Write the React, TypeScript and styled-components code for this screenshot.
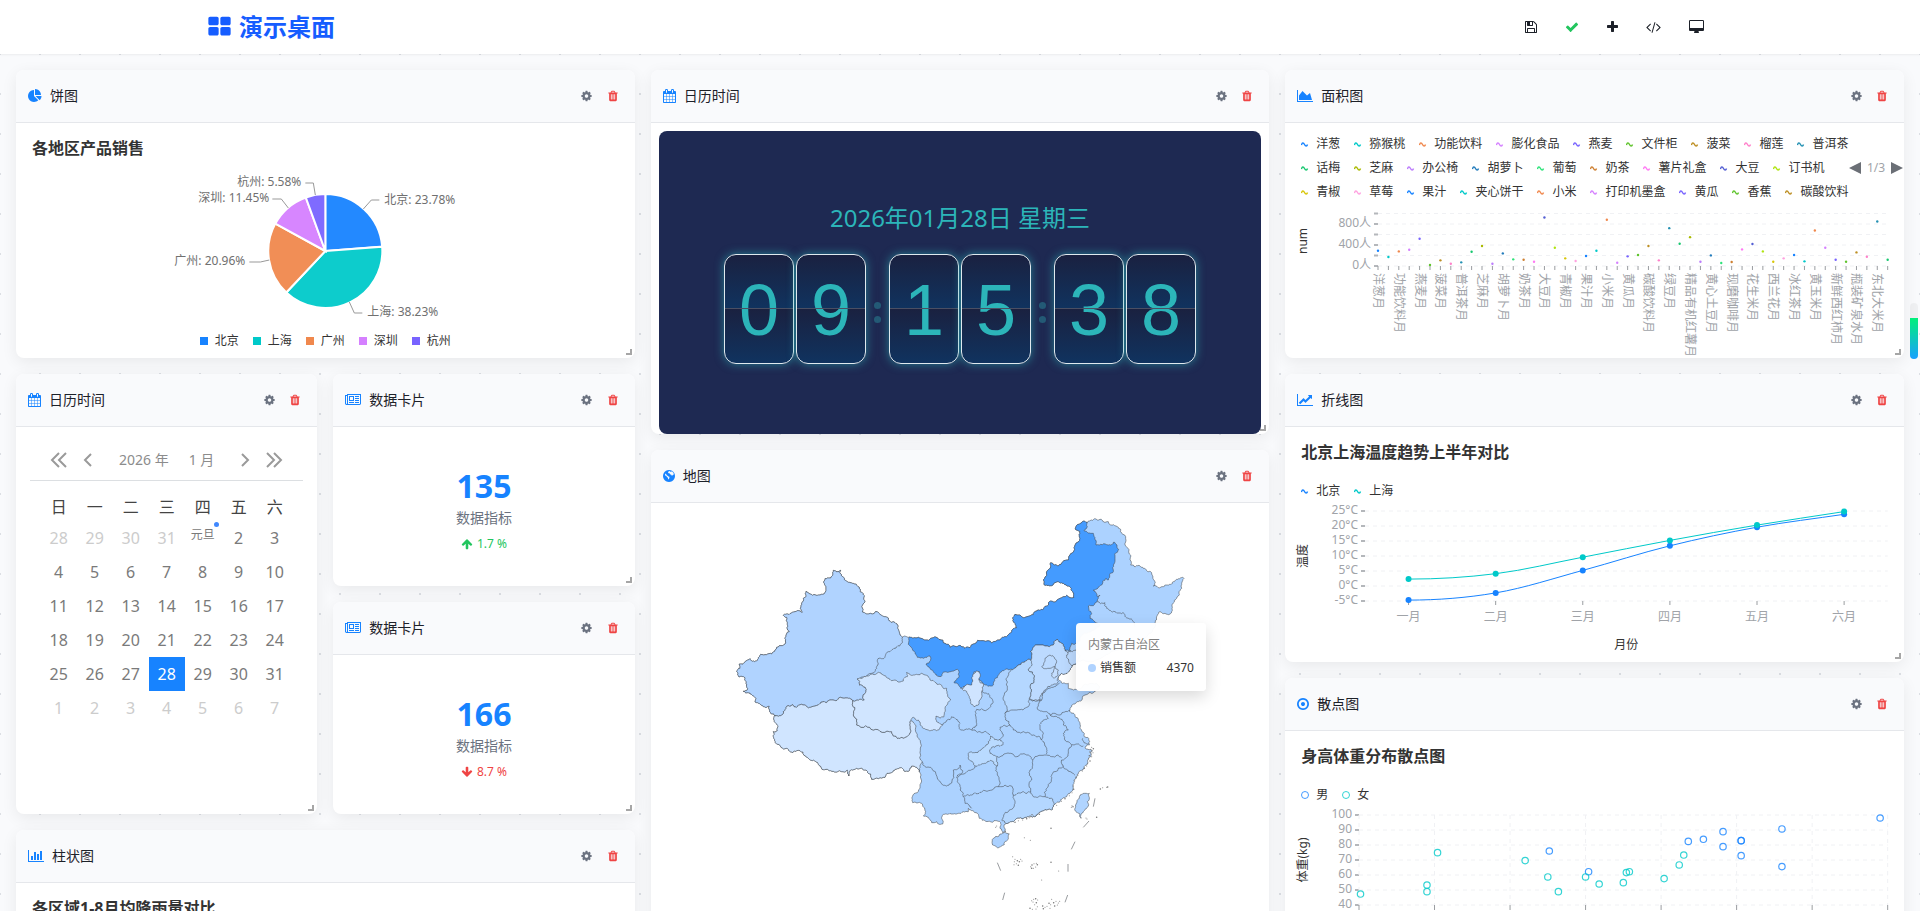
import React, { useLayoutEffect, useRef, useState } from 'react';
import styled, { createGlobalStyle } from 'styled-components';

const GlobalStyle = createGlobalStyle`
  *, *::before, *::after { box-sizing: border-box; }
  body {
    margin: 0;
    background: #f9fafc;
    color: #1d2129;
    font-family: 'Noto Sans', 'Noto Sans CJK SC', sans-serif;
    font-size: 14px;
    line-height: 20px;
  }
  button { font: inherit; color: inherit; background: none; border: 0; padding: 0; cursor: pointer; }
  h1, h2, h3, p, ul { margin: 0; padding: 0; }
  ul { list-style: none; }
  svg text { font-size: 12px; }
`;

/* ---------- icons ---------- */

const glyphs = {
  thLarge: ['64 0 1664 1792', 'M832 1024v384q0 52-38 90t-90 38h-512q-52 0-90-38t-38-90v-384q0-52 38-90t90-38h512q52 0 90 38t38 90zm0-768v384q0 52-38 90t-90 38h-512q-52 0-90-38t-38-90v-384q0-52 38-90t90-38h512q52 0 90 38t38 90zm896 768v384q0 52-38 90t-90 38h-512q-52 0-90-38t-38-90v-384q0-52 38-90t90-38h512q52 0 90 38t38 90zm0-768v384q0 52-38 90t-90 38h-512q-52 0-90-38t-38-90v-384q0-52 38-90t90-38h512q52 0 90 38t38 90z'],
  save: ['128 0 1536 1792', 'M512 1536h768v-384h-768v384zm896 0h128v-896q0-14-10-38.5t-20-34.5l-281-281q-10-10-34-20t-39-10v416q0 40-28 68t-68 28h-576q-40 0-68-28t-28-68v-416h-128v1280h128v-416q0-40 28-68t68-28h832q40 0 68 28t28 68v416zm-384-928v-320q0-13-9.5-22.5t-22.5-9.5h-192q-13 0-22.5 9.5t-9.5 22.5v320q0 13 9.5 22.5t22.5 9.5h192q13 0 22.5-9.5t9.5-22.5zm640 32v928q0 40-28 68t-68 28h-1344q-40 0-68-28t-28-68v-1344q0-40 28-68t68-28h928q40 0 88 20t76 48l280 280q28 28 48 76t20 88z'],
  check: ['0 0 1792 1792', 'M1671 566q0 40-28 68l-724 724-136 136q-28 28-68 28t-68-28l-136-136-362-362q-28-28-28-68t28-68l136-136q28-28 68-28t68 28l294 295 656-657q28-28 68-28t68 28l136 136q28 28 28 68z'],
  plus: ['192 0 1408 1792', 'M1600 736v192q0 40-28 68t-68 28h-416v416q0 40-28 68t-68 28h-192q-40 0-68-28t-28-68v-416h-416q-40 0-68-28t-28-68v-192q0-40 28-68t68-28h416v-416q0-40 28-68t68-28h192q40 0 68 28t28 68v416h416q40 0 68 28t28 68z'],
  code: ['64 0 1920 1792', 'M681 1399l-50 50q-10 10-23 10t-23-10l-466-466q-10-10-10-23t10-23l466-466q10-10 23-10t23 10l50 50q10 10 10 23t-10 23l-393 393 393 393q10 10 10 23t-10 23zm591-1067l-373 1291q-4 13-15.5 19.5t-23.5 2.5l-62-17q-13-4-19.5-15.5t-2.5-24.5l373-1291q4-13 15.5-19.5t23.5-2.5l62 17q13 4 19.5 15.5t2.5 24.5zm657 651l-466 466q-10 10-23 10t-23-10l-50-50q-10-10-10-23t10-23l393-393-393-393q-10-10-10-23t10-23l50-50q10-10 23-10t23 10l466 466q10 10 10 23t-10 23z'],
  desktop: ['0 0 1920 1792', 'M1792 992v-832q0-13-9.5-22.5t-22.5-9.5h-1600q-13 0-22.5 9.5t-9.5 22.5v832q0 13 9.5 22.5t22.5 9.5h1600q13 0 22.5-9.5t9.5-22.5zm128-832v1088q0 66-47 113t-113 47h-544q0 37 16 77.5t32 71 16 43.5q0 26-19 45t-45 19h-512q-26 0-45-19t-19-45q0-14 16-44t32-70 16-78h-544q-66 0-113-47t-47-113v-1088q0-66 47-113t113-47h1600q66 0 113 47t47 113z'],
  cog: ['128 0 1536 1792', 'M1152 896q0-106-75-181t-181-75-181 75-75 181 75 181 181 75 181-75 75-181zm512-109v222q0 12-8 23t-20 13l-185 28q-19 54-39 91 35 50 107 138 10 12 10 25t-9 23q-27 37-99 108t-94 71q-12 0-26-9l-138-108q-44 23-91 38-16 136-29 186-7 28-36 28h-222q-14 0-24.5-8.5t-11.5-21.5l-28-184q-49-16-90-37l-141 107q-10 9-25 9-14 0-25-11-126-114-165-168-7-10-7-23 0-12 8-23 15-21 51-66.5t54-70.5q-27-50-41-99l-183-27q-13-2-21-12.5t-8-23.5v-222q0-12 8-23t19-13l186-28q14-46 39-92-40-57-107-138-10-12-10-24 0-10 9-23 26-36 98.5-107.5t94.5-71.5q13 0 26 10l138 107q44-23 91-38 16-136 29-186 7-28 36-28h222q14 0 24.5 8.5t11.5 21.5l28 184q49 16 90 37l142-107q9-9 24-9 13 0 25 10 129 119 165 170 7 8 7 22 0 12-8 23-15 21-51 66.5t-54 70.5q26 50 41 98l183 28q13 2 21 12.5t8 23.5z'],
  trash: ['192 0 1408 1792', 'M704 1376v-704q0-14-9-23t-23-9h-64q-14 0-23 9t-9 23v704q0 14 9 23t23 9h64q14 0 23-9t9-23zm256 0v-704q0-14-9-23t-23-9h-64q-14 0-23 9t-9 23v704q0 14 9 23t23 9h64q14 0 23-9t9-23zm256 0v-704q0-14-9-23t-23-9h-64q-14 0-23 9t-9 23v704q0 14 9 23t23 9h64q14 0 23-9t9-23zm-544-992h448l-48-117q-7-9-17-11h-317q-10 2-17 11zm928 32v64q0 14-9 23t-23 9h-96v948q0 83-47 143.5t-113 60.5h-832q-66 0-113-58.5t-47-141.5v-952h-96q-14 0-23-9t-9-23v-64q0-14 9-23t23-9h309l70-167q15-37 54-63t79-26h320q40 0 79 26t54 63l70 167h309q14 0 23 9t9 23z'],
  pie: ['0 0 1792 1792', 'M768 890l546 546q-106 108-247.5 168t-298.5 60q-209 0-385.5-103t-279.5-279.5-103-385.5 103-385.5 279.5-279.5 385.5-103v762zm187 6h773q0 157-60 298.5t-168 247.5zm709-128h-768v-768q209 0 385.5 103t279.5 279.5 103 385.5z'],
  calendar: ['64 0 1664 1792', 'M192 1664h288v-288h-288v288zm352 0h320v-288h-320v288zm-352-352h288v-320h-288v320zm352 0h320v-320h-320v320zm-352-384h288v-288h-288v288zm736 736h320v-288h-320v288zm-384-736h320v-288h-320v288zm768 736h288v-288h-288v288zm-384-352h320v-320h-320v320zm-352-864v-288q0-13-9.5-22.5t-22.5-9.5h-64q-13 0-22.5 9.5t-9.5 22.5v288q0 13 9.5 22.5t22.5 9.5h64q13 0 22.5-9.5t9.5-22.5zm736 864h288v-320h-288v320zm-384-384h320v-288h-320v288zm384 0h288v-288h-288v288zm32-480v-288q0-13-9.5-22.5t-22.5-9.5h-64q-13 0-22.5 9.5t-9.5 22.5v288q0 13 9.5 22.5t22.5 9.5h64q13 0 22.5-9.5t9.5-22.5zm384-64v1280q0 52-38 90t-90 38h-1408q-52 0-90-38t-38-90v-1280q0-52 38-90t90-38h128v-96q0-66 47-113t113-47h64q66 0 113 47t47 113v96h384v-96q0-66 47-113t113-47h64q66 0 113 47t47 113v96h128q52 0 90 38t38 90z'],
  news: ['0 0 2048 1792', 'M1024 512h-384v384h384v-384zm128 640v128h-640v-128h640zm0-768v640h-640v-640h640zm640 768v128h-512v-128h512zm0-256v128h-512v-128h512zm0-256v128h-512v-128h512zm0-256v128h-512v-128h512zm-1536 960v-960h-128v960q0 26 19 45t45 19 45-19 19-45zm1664 0v-1088h-1536v1088q0 33-11 64h1483q26 0 45-19t19-45zm128-1216v1216q0 80-56 136t-136 56h-1664q-80 0-136-56t-56-136v-1088h256v-128h1792z'],
  bars: ['0 0 2048 1792', 'M640 896v512h-256v-512h256zm384-512v1024h-256v-1024h256zm1024 1152v128h-2048v-1536h128v1408h1920zm-640-896v768h-256v-768h256zm384-384v1152h-256v-1152h256z'],
  area: ['0 0 2048 1792', 'M2048 1536v128h-2048v-1536h128v1408h1920zm-384-1024l256 896h-1664v-576l448-576 576 576z'],
  line: ['0 0 2048 1792', 'M2048 1536v128h-2048v-1536h128v1408h1920zm-128-1248v435q0 21-19.5 29.5t-35.5-7.5l-121-121-633 633q-10 10-23 10t-23-10l-233-233-416 416-192-192 585-585q10-10 23-10t23 10l233 233 464-464-121-121q-16-16-7.5-35.5t29.5-19.5h435q14 0 23 9t9 23z'],
  target: ['128 0 1536 1792', 'M1152 896q0 106-75 181t-181 75-181-75-75-181 75-181 181-75 181 75 75 181zm-256-544q-148 0-273 73t-198 198-73 273 73 273 198 198 273 73 273-73 198-198 73-273-73-273-198-198-273-73zm768 544q0 209-103 385.5t-279.5 279.5-385.5 103-385.5-103-279.5-279.5-103-385.5 103-385.5 279.5-279.5 385.5-103 385.5 103 279.5 279.5 103 385.5z'],
  globe: ['128 0 1536 1792', 'M896 128q209 0 385.5 103t279.5 279.5 103 385.5-103 385.5-279.5 279.5-385.5 103-385.5-103-279.5-279.5-103-385.5 103-385.5 279.5-279.5 385.5-103zM1000 260l-170 60-60 120 60 90 150-30-20 120 110 80 90-10 60 150 130-10 60-110 110-10-50-200-170-190-120-10-60 60zM440 560l-60 140 60 160 150 60 60 130 100 40 40 200 70 40 90-200-10-130-170-60-40-90-140-60-40-130z'],
  arrow: ['64 0 1664 1792', 'M1675 971q0 51-37 90l-75 75q-38 38-91 38-54 0-90-38l-294-293v704q0 52-37.5 84.5t-90.5 32.5h-128q-53 0-90.5-32.5t-37.5-84.5v-704l-294 293q-36 38-90 38t-90-38l-75-75q-38-38-38-90 0-53 38-91l651-651q35-37 90-37 54 0 91 37l651 651q37 39 37 91z'],
} as const;

type GlyphName = keyof typeof glyphs;

const Glyph = styled.svg`
  display: block;
  flex: none;
  fill: currentColor;
`;

function Icon({ name, size = 14, down }: { name: GlyphName; size?: number; down?: boolean }) {
  const [box, d] = glyphs[name];
  const w = Number(box.split(' ')[2]);
  return (
    <Glyph viewBox={box} width={Math.ceil((w / 1792) * size)} height={size} aria-hidden>
      <path d={d} fillRule="evenodd" transform={down ? 'rotate(180 896 896)' : undefined} />
    </Glyph>
  );
}

/* ---------- page shell ---------- */

const Page = styled.div`
  height: 100vh;
  display: flex;
  flex-direction: column;
`;

const TopBar = styled.header`
  flex: none;
  height: 54px;
  background: #fff;
  box-shadow: 0 1px 2px rgba(0, 0, 0, 0.06);
  position: relative;
  z-index: 1;
`;

const TopBarInner = styled.div`
  max-width: 1536px;
  height: 100%;
  margin: 0 auto;
  padding: 0 16px;
  display: flex;
  align-items: center;
  justify-content: space-between;
`;

const Brand = styled.h1`
  display: flex;
  align-items: center;
  gap: 8px;
  font-size: 24px;
  line-height: 32px;
  font-weight: 700;
  color: #165dff;
`;

const Toolbar = styled.nav`
  display: flex;
  gap: 12px;
`;

const ToolButton = styled.button<{ $color?: string }>`
  padding: 8px;
  color: ${(p) => p.$color ?? '#1d2129'};
`;

const Board = styled.main`
  flex: 1;
  min-height: 0;
  overflow-y: auto;
  scrollbar-width: none;
  padding: 16px;
  background-color: #f9fafc;
  background-image: radial-gradient(#dcdfe4 1px, transparent 1px), radial-gradient(#dcdfe4 1px, transparent 1px);
  background-size: 40px 40px;
  background-position: 0 0, 20px 20px;
`;

const Grid = styled.div`
  display: grid;
  grid-template-columns: repeat(6, minmax(0, 1fr));
  grid-auto-rows: 60px;
  gap: 16px;
`;

const ScrollHint = styled.div`
  position: fixed;
  right: 2px;
  top: 303px;
  width: 8px;
  height: 56px;
  border-radius: 4px;
  background: rgba(0, 0, 0, 0.04);
  display: flex;
  align-items: flex-end;
`;

const ScrollHintBar = styled.div`
  width: 100%;
  height: 41px;
  border-radius: 0 0 4px 4px;
  background: linear-gradient(#00f07a, #18a0ff);
`;

/* ---------- cards ---------- */

const CardBox = styled.section<{ $col: number; $cols: number; $row: number; $rows: number }>`
  grid-column: ${(p) => p.$col} / span ${(p) => p.$cols};
  grid-row: ${(p) => p.$row} / span ${(p) => p.$rows};
  position: relative;
  display: flex;
  flex-direction: column;
  background: #fff;
  border-radius: 8px;
  box-shadow: 0 4px 16px rgba(0, 0, 0, 0.07);
`;

const CardHead = styled.header`
  flex: none;
  height: 53px;
  padding: 0 12px;
  display: flex;
  align-items: center;
  justify-content: space-between;
  background: #f9fafc;
  border-bottom: 1px solid #e5e7eb;
  border-radius: 8px 8px 0 0;
`;

const CardName = styled.h2`
  display: flex;
  align-items: center;
  gap: 8px;
  font-size: 14px;
  line-height: 20px;
  font-weight: 400;
  svg { color: #1783ff; }
`;

const CardActions = styled.div`
  display: flex;
  gap: 6px;
`;

const CardAction = styled.button<{ $danger?: boolean }>`
  width: 20px;
  height: 20px;
  display: grid;
  place-items: center;
  color: ${(p) => (p.$danger ? '#ef4444' : '#6b7280')};
`;

const CardBody = styled.div`
  flex: 1;
  min-height: 0;
  padding: 8px 8px 0;
  display: flex;
  flex-direction: column;
`;

const ResizeGrip = styled.span`
  position: absolute;
  right: 3px;
  bottom: 3px;
  width: 6px;
  height: 6px;
  border: solid rgba(0, 0, 0, 0.35);
  border-width: 0 2px 2px 0;
`;

interface CardProps {
  icon: GlyphName;
  name: string;
  at: [col: number, cols: number, row: number, rows: number];
  children?: React.ReactNode;
}

function Card({ icon, name, at, children }: CardProps) {
  return (
    <CardBox $col={at[0]} $cols={at[1]} $row={at[2]} $rows={at[3]}>
      <CardHead>
        <CardName><Icon name={icon} />{name}</CardName>
        <CardActions>
          <CardAction type="button" aria-label="设置"><Icon name="cog" size={12} /></CardAction>
          <CardAction type="button" aria-label="删除" $danger><Icon name="trash" size={12} /></CardAction>
        </CardActions>
      </CardHead>
      <CardBody>{children}</CardBody>
      <ResizeGrip />
    </CardBox>
  );
}

/* ---------- shared chart parts ---------- */

const palette = [
  '#1783ff', '#00c9c9', '#f0884d', '#d580ff', '#7863ff', '#60c42d', '#bd8f24', '#ff80ca', '#2491b3', '#17c76f',
  '#aaba01', '#bc7cfc', '#237cbc', '#2de379', '#ce8032', '#ff7af4', '#545fd3', '#afe410', '#d8c608', '#ffa1e0',
];
const colorOf = (i: number) => palette[i % palette.length];

const ChartTitle = styled.h3`
  margin: 5px 0 0 8px;
  font-size: 16px;
  line-height: 24px;
  font-weight: 700;
  color: #333;
`;

const LegendList = styled.ul<{ $center?: boolean }>`
  flex: 1;
  display: flex;
  flex-wrap: wrap;
  column-gap: 14px;
  justify-content: ${(p) => (p.$center ? 'center' : 'flex-start')};
`;

const LegendItem = styled.li`
  display: flex;
  align-items: center;
  gap: 7px;
  font-size: 12px;
  line-height: 24px;
  color: #333;
  white-space: nowrap;
`;

const LegendRow = styled.div<{ $top: number; $inset?: number }>`
  flex: none;
  display: flex;
  align-items: center;
  margin-top: ${(p) => p.$top}px;
  padding-left: ${(p) => p.$inset ?? 8}px;
`;

type Mark = 'square' | 'wave' | 'ring';

function LegendMark({ kind, color }: { kind: Mark; color: string }) {
  return (
    <svg width={8} height={8} viewBox="0 0 8 8" aria-hidden>
      {kind === 'square' && <rect width={8} height={8} fill={color} />}
      {kind === 'wave' && <path d="M0.5 5C1 2.5 2.5 2.5 3.5 4.5S6 6.5 6.5 4.5" fill="none" stroke={color} strokeWidth={1.4} />}
      {kind === 'ring' && <circle cx={4} cy={4} r={3.5} fill="none" stroke={color} opacity={0.8} />}
    </svg>
  );
}

function Legend({ names, kind, center }: { names: string[]; kind: Mark; center?: boolean }) {
  return (
    <LegendList $center={center}>
      {names.map((n, i) => (
        <LegendItem key={n}><LegendMark kind={kind} color={colorOf(i)} />{n}</LegendItem>
      ))}
    </LegendList>
  );
}

const PlotBox = styled.div<{ $h: number }>`
  flex: none;
  height: ${(p) => p.$h}px;
  margin: 0 -8px;
  svg { display: block; overflow: visible; }
`;

function Plot({ height, draw }: { height: number; draw: (width: number) => React.ReactNode }) {
  const ref = useRef<HTMLDivElement>(null);
  const [width, setWidth] = useState(600);
  useLayoutEffect(() => {
    const el = ref.current!;
    const measure = () => setWidth(el.getBoundingClientRect().width);
    measure();
    const ro = new ResizeObserver(measure);
    ro.observe(el);
    return () => ro.disconnect();
  }, []);
  return (
    <PlotBox ref={ref} $h={height}>
      <svg width={width} height={height}>{draw(width)}</svg>
    </PlotBox>
  );
}

const AXIS = '#a0a3a8';
const GRID = '#f0f1f4';

function YAxis({ x, right, rows }: { x: number; right: number; rows: { y: number; label?: string }[] }) {
  return (
    <g>
      {rows.map((r) => (
        <g key={r.y}>
          <line x1={x} x2={right} y1={r.y} y2={r.y} stroke={GRID} strokeDasharray="4 4" />
          <line x1={x - 4} x2={x} y1={r.y} y2={r.y} stroke="#b4b7bb" strokeWidth={2} />
          {r.label && <text x={x - 7} y={r.y + 3} textAnchor="end" fill={AXIS}>{r.label}</text>}
        </g>
      ))}
    </g>
  );
}

function AxisName({ y, children }: { y: number; children: string }) {
  return <text transform={`translate(22 ${y}) rotate(-90)`} textAnchor="middle" fill="#333">{children}</text>;
}

/* ---------- pie ---------- */

const cities = [
  { name: '北京', share: 23.78, lead: '38,-42 46,-51 54,-51', tx: 59, ty: -47 },
  { name: '上海', share: 38.23, lead: '24,51 29,62 37,62', tx: 42, ty: 65 },
  { name: '广州', share: 20.96, lead: '-56,9 -65,11 -76,11', tx: -80, ty: 14 },
  { name: '深圳', share: 11.45, lead: '-37,-43 -44,-52 -53,-52', tx: -56, ty: -49 },
  { name: '杭州', share: 5.58, lead: '-10,-56 -12,-68 -20,-68', tx: -24, ty: -65 },
];

function PieChart() {
  const r = 57;
  let from = 0;
  return (
    <Plot height={164} draw={(w) => (
      <g transform={`translate(${w / 2} 91)`}>
        {cities.map((c, i) => {
          const a = from;
          const b = (from += (c.share / 100) * Math.PI * 2);
          const p = (t: number) => `${Math.sin(t) * r} ${-Math.cos(t) * r}`;
          return (
            <g key={c.name}>
              <path d={`M0 0L${p(a)}A${r} ${r} 0 ${b - a > Math.PI ? 1 : 0} 1 ${p(b)}Z`} fill={colorOf(i)} fillOpacity={0.95} stroke="#fff" strokeWidth={2} />
              <polyline points={c.lead} fill="none" stroke="#999" />
              <text x={c.tx} y={c.ty} textAnchor={c.tx < 0 ? 'end' : 'start'} fill="#707070">{`${c.name}: ${c.share}%`}</text>
            </g>
          );
        })}
      </g>
    )} />
  );
}

/* ---------- calendar ---------- */

const Calendar = styled.div`
  margin: 0 6px;
`;

const MonthNav = styled.div`
  height: 46px;
  padding: 4px 20px 0;
  border-bottom: 1px solid #dcdfe2;
  display: flex;
  align-items: center;
  justify-content: space-between;
  color: #8c8c8c;
  font-size: 14px;
`;

const NavGroup = styled.div<{ $gap: number }>`
  display: flex;
  align-items: center;
  gap: ${(p) => p.$gap}px;
`;

const Arrows = styled.svg`
  display: block;
  fill: none;
  stroke: #9a9a9a;
  stroke-width: 2;
`;

const DayTable = styled.table`
  margin: 11px auto 0;
  border-collapse: collapse;
  table-layout: fixed;
  font-size: 16px;
  text-align: center;
  th { width: 36px; height: 29px; padding: 0; font-weight: 400; color: #444; }
`;

const Day = styled.td<{ $out?: boolean; $today?: boolean }>`
  height: 34px;
  padding: 0;
  color: ${(p) => (p.$today ? '#fff' : p.$out ? '#ccc' : '#7a7a7a')};
  background: ${(p) => (p.$today ? '#1783ff' : 'transparent')};
`;

const Holiday = styled.span`
  position: relative;
  display: block;
  padding-bottom: 6px;
  font-size: 12px;
  &::after {
    content: '';
    position: absolute;
    top: -3px;
    right: 2px;
    width: 5px;
    height: 5px;
    border-radius: 50%;
    background: #4088fe;
  }
`;

function NavArrow({ label, double, flip }: { label: string; double?: boolean; flip?: boolean }) {
  return (
    <button type="button" aria-label={label}>
      <Arrows width={double ? 18 : 10} height={18} viewBox={double ? '0 0 18 18' : '0 0 10 18'}>
        <g transform={flip ? `translate(${double ? 18 : 10} 0) scale(-1 1)` : undefined}>
          <path d={double ? 'M9 2L2 9l7 7M16 2L9 9l7 7' : 'M8 3L2 9l6 6'} />
        </g>
      </Arrows>
    </button>
  );
}

function CalendarView() {
  const weeks = Array.from({ length: 6 }, (_, w) => Array.from({ length: 7 }, (_, d) => w * 7 + d - 3));
  return (
    <Calendar>
      <MonthNav>
        <NavGroup $gap={15}><NavArrow label="上一年" double /><NavArrow label="上个月" /></NavGroup>
        <NavGroup $gap={20}><button type="button">2026 年</button><button type="button">1 月</button></NavGroup>
        <NavGroup $gap={15}><NavArrow label="下个月" flip /><NavArrow label="下一年" double flip /></NavGroup>
      </MonthNav>
      <DayTable>
        <thead>
          <tr>{[...'日一二三四五六'].map((d) => <th key={d} scope="col">{d}</th>)}</tr>
        </thead>
        <tbody>
          {weeks.map((week, w) => (
            <tr key={w}>
              {week.map((n) => (
                <Day key={n} $out={n < 1 || n > 31} $today={n === 28}>
                  {n === 1 ? <Holiday>元旦</Holiday> : n < 1 ? 31 + n : n > 31 ? n - 31 : n}
                </Day>
              ))}
            </tr>
          ))}
        </tbody>
      </DayTable>
    </Calendar>
  );
}

/* ---------- data card ---------- */

const Stat = styled.div`
  flex: 1;
  display: flex;
  flex-direction: column;
  align-items: center;
  justify-content: center;
  padding-bottom: 2px;
`;

const StatValue = styled.p`
  font-size: 32px;
  line-height: 40px;
  font-weight: 700;
  color: #1783ff;
`;

const StatLabel = styled.p`
  margin: 2px 0 7px;
  color: #6b7280;
`;

const StatTrend = styled.p<{ $up: boolean }>`
  display: flex;
  align-items: center;
  gap: 4px;
  font-size: 12px;
  line-height: 18px;
  color: ${(p) => (p.$up ? '#22c55e' : '#ef4444')};
`;

function StatView({ value, change, up }: { value: number; change: string; up: boolean }) {
  return (
    <Stat>
      <StatValue>{value}</StatValue>
      <StatLabel>数据指标</StatLabel>
      <StatTrend $up={up}><Icon name="arrow" size={12} down={!up} />{change}</StatTrend>
    </Stat>
  );
}

/* ---------- clock ---------- */

const Clock = styled.div`
  flex: 1;
  border-radius: 8px;
  background: #1e2952;
  color: #2cb5b9;
  display: flex;
  flex-direction: column;
  align-items: center;
  justify-content: center;
`;

const ClockDate = styled.p`
  margin-bottom: 20px;
  font-size: 24px;
  line-height: 32px;
`;

const Digits = styled.div`
  display: flex;
  align-items: center;
  gap: 2px;
`;

const Digit = styled.span`
  position: relative;
  width: 70px;
  height: 110px;
  border: 1px solid #dfe9ee;
  border-radius: 12px;
  background: linear-gradient(#1a2140, #10335f 50%, #1a2140 50%, #10335f);
  box-shadow: 0 0 10px rgba(44, 181, 185, 0.6);
  font: 72px/110px 'Liberation Sans', sans-serif;
  text-align: center;
  &::after {
    content: '';
    position: absolute;
    left: 0;
    right: 0;
    top: 53px;
    height: 1px;
    background: #4a4f63;
  }
`;

const Colon = styled.span`
  width: 19px;
  display: flex;
  flex-direction: column;
  align-items: center;
  gap: 7px;
  padding-top: 8px;
  &::before, &::after {
    content: '';
    width: 7px;
    height: 7px;
    border-radius: 50%;
    background: #245a76;
  }
`;

function ClockView() {
  return (
    <Clock>
      <ClockDate>2026年01月28日 星期三</ClockDate>
      <Digits>
        {[...'09:15:38'].map((c, i) => (c === ':' ? <Colon key={i} /> : <Digit key={i}>{c}</Digit>))}
      </Digits>
    </Clock>
  );
}

/* ---------- map ---------- */

type Pt = [number, number];

const trace = (dx: number, dy: number, s: string): Pt[] =>
  s.trim().split(/\s+/).map((p) => {
    const [x, y] = p.split(',').map(Number);
    return [x + dx, y + dy];
  });

const west = (s: string) => trace(0, 0, s);
const north = (s: string) => trace(840, 30, s);
const south = (s: string) => trace(540, 480, s);
const plateau = (s: string) => trace(120, 540, s);

/* Breaks an edge into small irregular steps; the same edge always gives the same steps. */
function roughEdge(a: Pt, b: Pt, depth: number): Pt[] {
  const len = Math.hypot(b[0] - a[0], b[1] - a[1]);
  if (depth === 0 || len < 5) return [b];
  const flip = a[0] > b[0] || (a[0] === b[0] && a[1] > b[1]);
  const [p, q] = flip ? [b, a] : [a, b];
  const n = Math.sin(p[0] * 12.98 + p[1] * 78.23 + q[0] * 37.71 + q[1] * 9.13) * 43758.54;
  const k = (n - Math.floor(n) - 0.5) * 0.44;
  const mid: Pt = [
    Math.round((p[0] + q[0]) / 2 - (q[1] - p[1]) * k),
    Math.round((p[1] + q[1]) / 2 + (q[0] - p[0]) * k),
  ];
  return [...roughEdge(a, mid, depth - 1), ...roughEdge(mid, b, depth - 1)];
}

function pathOf(pts: Pt[], closed: boolean) {
  const ring = closed ? [...pts, pts[0]] : pts;
  const out: Pt[] = [ring[0]];
  for (let i = 1; i < ring.length; i++) out.push(...roughEdge(ring[i - 1], ring[i], 3));
  return 'M' + out.map((p) => p.join(' ')).join('L') + (closed ? 'Z' : '');
}

const mongoliaNorthWest = west('568,411 580,414 610,418 640,413 668,420 675,430 710,440 735,445 760,432 790,422 840,420 860,410 875,395 890,383 878,362 885,343');
const mongoliaNorthEast = north('60,315 75,322 88,318 108,303 130,298 145,285 148,275 180,265 222,262 218,245 205,228 190,220 165,218 150,228 132,222 130,210 140,185 152,158 175,168 205,150 210,135 225,105 240,85 240,65 228,60 228,48 245,37 262,37');
const tibetSouth = plateau('478,275 470,262 455,258 448,272 420,263 400,272 375,292 335,298 332,282 318,270 290,265 272,270 266,288 262,270 235,273 205,270 180,258 160,240 140,232 110,212 98,218 80,205 50,192 40,170 40,155 52,152 52,135 42,120 46,105');
const xinjiangNorth = west('165,647 152,640 148,619 125,616 105,606 103,590 85,578 70,574 82,570 78,550 75,533 57,531 50,514 60,505 58,492 75,486 90,476 97,484 110,483 122,463 140,464 165,450 195,432 198,405 208,395 202,370 200,352 190,346 210,341 240,333 246,338 241,325 250,295 258,274 270,282 300,285 314,279 313,250 315,236 330,234 338,226 340,211 362,211 365,228 385,247 405,252 418,262 420,275 432,290 425,320 427,336 445,342 485,346 505,358 525,368 535,388 547,412');
const xinjiangEast = west('547,412 540,437 520,447 505,455 492,475 473,478 470,500 462,518 412,537');
const xinjiangQinghai = west('412,537 420,545 418,555 430,560 438,574 430,584 433,600');
const tibetNorth = west('398,602 385,595 360,592 330,600 320,608 300,610 285,618 260,620 245,613 230,622 200,619 190,635 184,646 165,647');
const qinghaiTibet = plateau('572,114 555,95 552,110 528,108 530,125 548,135 530,152 505,150 490,145 475,120 460,112 452,122 452,155 440,170 412,175 395,155 340,150 290,135 280,105 278,62');

const mainland: Pt[] = [
  ...mongoliaNorthWest,
  ...mongoliaNorthEast,
  ...north('270,32 300,28 325,35 335,45 352,50 365,70 375,105 390,150 392,165 420,168 440,182 455,192 462,210 460,228 490,230 500,225 520,215 530,208 552,205 545,220 545,235 530,265 520,280 510,312 480,305 470,320 468,345 440,380 400,400 350,420 310,440 280,455 250,450 228,462 215,466 205,486 185,490 175,500 178,512 195,520 205,520 205,535 220,540 250,525 300,530 280,548 255,555 235,575 215,590 208,603 225,620 240,640'),
  ...south('545,210 552,225 566,235 568,255 555,262 575,270 572,290 560,315 548,330 530,350 522,370 518,392 500,410 480,425 460,440 455,450 430,452 415,460 395,470 370,475 340,485 318,490 312,500 318,515 308,518 300,505 302,488 280,485 258,485 238,475 232,460 215,452 205,445 205,455 190,455 175,460 150,460 128,465 125,475 128,492 115,492 110,485 95,488 85,472 70,468 75,450 65,430 38,428 37,410 60,380'),
  ...tibetSouth,
  ...xinjiangNorth,
];

const regions: { name: string; fill: string; pts: Pt[] }[] = [
  { name: '新疆', fill: '#b0d3ff', pts: [...xinjiangNorth, ...xinjiangEast.slice(1), ...xinjiangQinghai.slice(1), ...tibetNorth] },
  {
    name: '西藏', fill: '#d0e5ff',
    pts: [...tibetNorth.slice().reverse(), ...qinghaiTibet.slice(11).reverse(), ...plateau('470,160 482,190 487,245 478,265'), ...tibetSouth],
  },
  {
    name: '青海', fill: '#d0e5ff',
    pts: [...west('412,537 440,528 475,517 490,525 510,538 550,543 562,530 560,517 580,525 605,520 630,540 660,552 680,565 692,600'), ...qinghaiTibet.slice(1), ...xinjiangQinghai.slice().reverse()],
  },
  {
    name: '内蒙古', fill: '#449bff',
    pts: [
      ...mongoliaNorthWest,
      ...mongoliaNorthEast,
      ...north('262,50 252,62 280,70 288,105 325,105 340,97 356,118 345,150 340,180 325,210 318,205 305,225 280,240 292,260 300,255 290,275 265,288 275,310 270,325 285,335 300,345 260,370 232,400 215,400 212,422 195,422 185,400 172,388 160,405 110,405 100,412 95,440 92,450 75,455 50,470 35,478'),
      ...west('875,508 850,512 835,525 820,555 800,555 790,550 778,540 777,515 762,515 755,555 722,565 702,548 717,530 715,510 690,515 668,520 660,530 640,515 618,492 632,480 630,468 592,472 578,450'),
    ],
  },
  { name: '宁夏', fill: '#cfe4ff', pts: west('768,513 778,515 777,540 790,552 785,575 780,600 775,615 762,620 752,610 748,590 740,575 725,566 755,555 758,525') },
  { name: '河北', fill: '#bcdaff', pts: north('100,412 95,440 85,478 103,500 90,530 88,565 120,572 125,555 135,540 155,525 175,515 175,500 185,490 205,486 215,466 228,462 240,440 228,420 212,425 195,422 185,400 172,388 160,405 110,405') },
  { name: '山西', fill: '#b4d7ff', pts: north('35,478 18,510 22,540 15,580 15,610 50,600 85,590 88,565 90,530 103,500 85,478 95,455 92,450 75,455 50,470') },
  { name: '重庆', fill: '#b9daff', pts: south('272,228 300,238 308,255 275,262 270,280 292,290 292,318 280,305 262,305 245,312 225,318 220,308 208,300 205,280 225,278 245,268 265,245') },
  { name: '广东', fill: '#b4d7ff', pts: south('340,405 370,395 392,395 410,412 435,410 455,415 460,440 455,450 430,452 415,460 395,470 370,475 340,485 318,490 305,480 325,455 345,430') },
  { name: '海南', fill: '#abd1ff', pts: south('280,535 300,522 328,522 322,540 312,555 295,564 277,552') },
  { name: '台湾', fill: '#b0d4ff', pts: south('555,400 568,400 562,425 550,455 543,475 528,455 527,435 538,410') },
  { name: '北京', fill: '#bcdaff', pts: north('125,470 135,445 150,435 170,455 165,470 150,475') },
  { name: '天津', fill: '#c4deff', pts: north('165,470 175,480 175,495 162,505 155,490') },
];

const borders: Pt[][] = [
  west('785,572 800,580 815,595 812,620 800,630 770,628 768,655'),
  south('228,175 230,190 215,210'),
  plateau('548,135 575,110 600,128'),
  south('180,190 182,210 215,210 240,215 270,225'),
  south('388,118 425,120 415,150 440,155 450,165 480,165 510,153'),
  south('425,120 425,100 440,90 470,75 480,68'),
  south('315,160 330,195 340,210 370,215 400,225 425,240 438,260 438,282'),
  south('440,165 445,175 425,185 420,205 430,220 425,240'),
  south('450,165 480,175 490,195 505,210 490,220 500,245 530,252 550,258'),
  south('515,255 505,275 485,300 490,320 510,335 525,345'),
  south('398,300 440,285 455,290 485,293'),
  south('490,320 465,335 455,355 440,385 435,410'),
  south('292,290 320,280 350,290 385,285 398,300 390,330 395,360 392,395'),
  south('330,195 300,202 310,225 300,238'),
  south('225,318 195,340 170,352 180,375 190,400 190,410 215,405 225,398 255,392 295,380 335,378 340,405'),
  south('292,318 292,345 295,380'),
  south('190,410 195,430 215,445'),
  plateau('487,245 500,262 515,265 548,315 570,312 580,270 600,255 608,275 590,290'),
  north('290,275 315,278 320,295 345,305 370,308 385,325 400,335 405,350'),
  north('205,425 202,445 215,466'),
  south('548,235 552,248 566,250'),
];

const seaDashes = ['580,440 585,415', '550,502 567,483', '514,568 525,545', '504,612 504,635', '292,608 302,632', '308,720 314,698', '495,727 503,705'].map(south);

const islets = south(
  '623,381 620,382 608,383 601,387 516,437 514,442 519,440 558,474 561,477 590,472 373,533 391,541 453,505 476,633 425,660 453,607 ' +
  '338,590 345,598 352,602 343,605 349,611 358,605 362,598 366,603 355,616 342,614 ' +
  '392,620 396,615 402,611 409,610 412,614 407,621 400,625 395,625 ' +
  '395,722 401,718 407,716 413,720 399,726 409,728 404,734 412,740 390,745 397,748 408,747 428,738 435,742 441,739 447,730 455,718 452,734 461,728 468,724 475,729 464,738 472,735 479,724 430,746 450,745 ' +
  '575,262 580,266 572,268 577,272 570,276 579,278 574,282 568,287 575,290 566,296 570,303 562,310 560,318 553,325 547,333 534,345 528,352 524,362 520,378 521,388 516,398 508,407 495,416 484,424 470,436 ' +
  '418,463 408,466 401,468 396,464 392,470 388,473 380,476 368,480 355,482 345,487 290,498 287,502',
);

const MapWrap = styled.div`
  position: relative;
  width: 480px;
  max-width: 100%;
  margin: -8px auto 0;
  svg { display: block; }
`;

const Shape = styled.path`
  fill: none;
  stroke: rgba(70, 74, 80, 0.55);
  stroke-width: 1;
  stroke-linejoin: round;
  vector-effect: non-scaling-stroke;
`;

const Tip = styled.div`
  position: absolute;
  left: 356px;
  top: 120px;
  width: 130px;
  height: 68px;
  padding: 12px;
  border-radius: 4px;
  background: rgba(255, 255, 255, 0.97);
  box-shadow: 0 6px 16px rgba(0, 0, 0, 0.15);
  font-size: 12px;
  color: #333;
`;

const TipTitle = styled.p`
  line-height: 20px;
  color: #808080;
`;

const TipRow = styled.p`
  display: flex;
  align-items: center;
  gap: 4px;
  line-height: 26px;
  &::before {
    content: '';
    width: 8px;
    height: 8px;
    border-radius: 50%;
    background: #b0d3ff;
  }
  b { margin-left: auto; font-weight: 400; }
`;

function MapView() {
  return (
    <MapWrap>
      <svg viewBox="0 9 1440 1251" width="100%" role="img" aria-label="地图">
        <Shape d={pathOf(mainland, true)} style={{ fill: '#acd2ff' }} />
        {regions.map((r) => <Shape key={r.name} d={pathOf(r.pts, true)} style={{ fill: r.fill }} />)}
        {borders.map((b, i) => <Shape key={i} d={pathOf(b, false)} />)}
        {seaDashes.map(([a, b], i) => <Shape key={i} d={`M${a}L${b}`} />)}
        {islets.map(([x, y], i) => <circle key={i} cx={x} cy={y} r={i % 3 ? 1.5 : 2.3} fill="#777" />)}
      </svg>
      <Tip>
        <TipTitle>内蒙古自治区</TipTitle>
        <TipRow>销售额<b>4370</b></TipRow>
      </Tip>
    </MapWrap>
  );
}

/* ---------- area chart ---------- */

const goods = [
  '洋葱', '猕猴桃', '功能饮料', '膨化食品', '燕麦', '文件柜', '菠菜', '榴莲', '普洱茶',
  '话梅', '芝麻', '办公椅', '胡萝卜', '葡萄', '奶茶', '薯片礼盒', '大豆', '订书机',
  '青椒', '草莓', '果汁', '夹心饼干', '小米', '打印机墨盒', '黄瓜', '香蕉', '碳酸饮料',
];

const goodsTicks = [
  '洋葱', '功能饮料', '燕麦', '菠菜', '普洱茶', '芝麻', '胡萝卜', '奶茶', '大豆', '青椒', '果汁', '小米', '黄瓜',
  '碳酸饮料', '绿豆', '精品有机红薯', '黄心土豆', '现磨咖啡', '花生米', '西兰花', '冰红茶', '黄玉米', '新鲜西红柿', '瓶装矿泉水', '东北大米',
];

const goodsCounts = [
  291, 171, 278, 310, 519, 19, 108, 44, 70, 272, 380, 44, 240, 127, 120, 82, 924, 348, 146, 95, 190, 291, 880, 63, 184,
  209, 380, 108, 721, 424, 550, 82, 202, 57, 76, 316, 418, 278, 82, 146, 209, 89, 677, 348, 120, 82, 259, 177, 848, 120,
];

const Pager = styled.div`
  flex: none;
  margin-right: -7px;
  width: 54px;
  display: flex;
  align-items: center;
  justify-content: space-between;
  font-size: 12px;
  color: #a0a3a8;
  svg { display: block; fill: #6b6f76; }
`;

function AreaChart() {
  const left = 93;
  const base = 61;
  return (
    <>
      <LegendRow $top={1}>
        <Legend names={goods} kind="wave" />
        <Pager>
          <button type="button" aria-label="上一页"><svg width={12} height={12}><path d="M12 0v12L0 6z" /></svg></button>
          1/3
          <button type="button" aria-label="下一页"><svg width={12} height={12}><path d="M0 0v12L12 6z" /></svg></button>
        </Pager>
      </LegendRow>
      <Plot height={153} draw={(w) => {
        const step = (w - 16 - left) / (goodsCounts.length - 1);
        const rows = [0, 200, 400, 600, 800, 1000].map((v) => ({ y: base + 1 - (v / 200) * 10.5, label: v % 400 === 0 ? `${v}人` : undefined }));
        return (
          <g>
            <AxisName y={37}>num</AxisName>
            <YAxis x={left} right={w - 16} rows={rows} />
            {goodsCounts.map((v, i) => (
              <g key={i} transform={`translate(${left + i * step} 0)`}>
                <line y1={base + 1} y2={base + 5} stroke="#9a9da1" />
                <circle cy={base + 1 - (v / 200) * 10.5} r={1.2} fill={colorOf(i)} />
                {i % 2 === 0 && <text transform={`translate(-4 ${base + 8}) rotate(90)`} fill={AXIS}>{goodsTicks[i / 2]}月</text>}
              </g>
            ))}
          </g>
        );
      }} />
    </>
  );
}

/* ---------- line chart ---------- */

const months = ['一月', '二月', '三月', '四月', '五月', '六月'];
const temps = [
  [-4.7, -2.3, 5.2, 13.4, 19.6, 23.9],
  [2.3, 4.1, 9.6, 15.2, 20.3, 24.8],
];

function smooth(pts: Pt[]) {
  let d = `M${pts[0]}`;
  for (let i = 0; i < pts.length - 1; i++) {
    const a = pts[i];
    const b = pts[i + 1];
    const slope = (j: number) => {
      if (j === 0 || j === pts.length - 1) return j === 0 ? 0 : (pts[j][1] - pts[j - 1][1]) / (pts[j][0] - pts[j - 1][0]);
      return (pts[j + 1][1] - pts[j - 1][1]) / (pts[j + 1][0] - pts[j - 1][0]);
    };
    const h = (b[0] - a[0]) / 3;
    d += `C${a[0] + h},${a[1] + h * slope(i)} ${b[0] - h},${b[1] - h * slope(i + 1)} ${b}`;
  }
  return d;
}

function LineChart() {
  const left = 80;
  const base = 98;
  const y = (t: number) => base - (t + 5) * 3;
  return (
    <Plot height={156} draw={(w) => {
      const band = (w - 16 - left) / months.length;
      const x = (i: number) => left + band * (i + 0.5);
      return (
        <g>
          <AxisName y={53}>温度</AxisName>
          <YAxis x={left} right={w - 16} rows={[-5, 0, 5, 10, 15, 20, 25].map((t) => ({ y: y(t), label: `${t}°C` }))} />
          {months.map((m, i) => (
            <g key={m}>
              <line x1={x(i)} x2={x(i)} y1={base} y2={base + 4} stroke="#9a9da1" />
              <text x={x(i)} y={base + 20} textAnchor="middle" fill={AXIS}>{m}</text>
            </g>
          ))}
          <text x={(left + w - 16) / 2} y={base + 48} textAnchor="middle" fill="#333">月份</text>
          {temps.map((row, s) => (
            <g key={s}>
              <path d={smooth(row.map((t, i) => [x(i), y(t)] as Pt))} fill="none" stroke={colorOf(s)} />
              {row.map((t, i) => <circle key={i} cx={x(i)} cy={y(t)} r={3} fill={colorOf(s)} />)}
            </g>
          ))}
        </g>
      );
    }} />
  );
}

/* ---------- scatter chart ---------- */

const people: Pt[][] = [
  [[167.6, 76], [170.2, 62.2], [176.8, 82.4], [177.8, 83.8], [179.1, 88.9], [179.1, 78.9], [180.3, 82.9], [180.3, 82.9], [180.3, 72.9], [183, 90.7], [183, 65.6], [189.5, 98]],
  [[155.1, 47.3], [159.5, 53.3], [159.5, 48.9], [160.2, 74.9], [166, 69.6], [167.5, 58.7], [168.2, 48.9], [170, 58.7], [170.9, 54], [172.5, 54.9], [172.7, 61.6], [172.9, 62.2], [175.2, 57.6], [176.2, 66.7], [176.5, 73.3]],
];

function ScatterChart() {
  const left = 74;
  const base = 98;
  const y = (kg: number) => base - (kg - 40) * 1.5;
  return (
    <Plot height={150} draw={(w) => {
      const x = (cm: number) => left + ((cm - 155) / 35) * (w - 16 - left);
      return (
        <g>
          <AxisName y={53}>体重(kg)</AxisName>
          <YAxis x={left} right={w - 16} rows={[40, 50, 60, 70, 80, 90, 100].map((k) => ({ y: y(k), label: `${k}` }))} />
          {[155, 160, 165, 170, 175, 180, 185, 190].map((c) => (
            <g key={c}>
              <line x1={x(c)} x2={x(c)} y1={y(100)} y2={base} stroke={GRID} strokeDasharray="4 4" />
              <line x1={x(c)} x2={x(c)} y1={base} y2={base + 5} stroke="#9a9da1" />
            </g>
          ))}
          {people.map((set, s) => set.map(([c, k], i) => (
            <circle key={`${s}-${i}`} cx={x(c)} cy={y(k)} r={3.2} fill="none" stroke={colorOf(s)} strokeWidth={1.2} opacity={0.8} />
          )))}
        </g>
      );
    }} />
  );
}

/* ---------- app ---------- */

export default function App() {
  return (
    <Page>
      <GlobalStyle />
      <TopBar>
        <TopBarInner>
          <Brand><Icon name="thLarge" size={24} />演示桌面</Brand>
          <Toolbar>
            <ToolButton type="button" aria-label="保存"><Icon name="save" /></ToolButton>
            <ToolButton type="button" aria-label="确认" $color="#22c55e"><Icon name="check" /></ToolButton>
            <ToolButton type="button" aria-label="添加"><Icon name="plus" /></ToolButton>
            <ToolButton type="button" aria-label="代码"><Icon name="code" /></ToolButton>
            <ToolButton type="button" aria-label="预览"><Icon name="desktop" /></ToolButton>
          </Toolbar>
        </TopBarInner>
      </TopBar>
      <Board>
        <Grid>
          <Card icon="pie" name="饼图" at={[1, 2, 1, 4]}>
            <ChartTitle>各地区产品销售</ChartTitle>
            <PieChart />
            <LegendRow $top={5} $inset={0}><Legend names={cities.map((c) => c.name)} kind="square" center /></LegendRow>
          </Card>
          <Card icon="calendar" name="日历时间" at={[1, 1, 5, 6]}><CalendarView /></Card>
          <Card icon="news" name="数据卡片" at={[2, 1, 5, 3]}><StatView value={135} change="1.7 %" up /></Card>
          <Card icon="news" name="数据卡片" at={[2, 1, 8, 3]}><StatView value={166} change="8.7 %" up={false} /></Card>
          <Card icon="bars" name="柱状图" at={[1, 2, 11, 4]}><ChartTitle>各区域1-8月均降雨量对比</ChartTitle></Card>

          <Card icon="calendar" name="日历时间" at={[3, 2, 1, 5]}><ClockView /></Card>
          <Card icon="globe" name="地图" at={[3, 2, 6, 8]}><MapView /></Card>

          <Card icon="area" name="面积图" at={[5, 2, 1, 4]}><AreaChart /></Card>
          <Card icon="line" name="折线图" at={[5, 2, 5, 4]}>
            <ChartTitle>北京上海温度趋势上半年对比</ChartTitle>
            <LegendRow $top={15}><Legend names={['北京', '上海']} kind="wave" /></LegendRow>
            <LineChart />
          </Card>
          <Card icon="target" name="散点图" at={[5, 2, 9, 4]}>
            <ChartTitle>身高体重分布散点图</ChartTitle>
            <LegendRow $top={15}><Legend names={['男', '女']} kind="ring" /></LegendRow>
            <ScatterChart />
          </Card>
        </Grid>
      </Board>
      <ScrollHint><ScrollHintBar /></ScrollHint>
    </Page>
  );
}
